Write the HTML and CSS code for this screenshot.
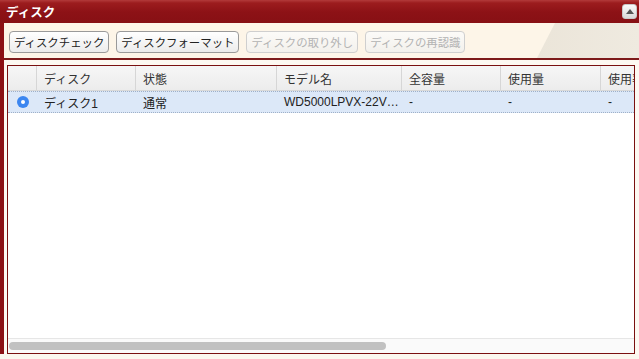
FILE: index.html
```html
<!DOCTYPE html>
<html lang="ja">
<head>
<meta charset="utf-8">
<link rel="stylesheet" href="styles.css">
</head>
<body>
<div class="panel">
  <div class="titlebar">
    <span class="title">ディスク</span>
    <span class="collapse"><svg width="8" height="5" viewBox="0 0 8 5"><path d="M0 5 L4 0 L8 5 Z" fill="#555"/></svg></span>
  </div>
  <div class="body">
    <div class="toolbar">
      <button class="btn">ディスクチェック</button>
      <button class="btn">ディスクフォーマット</button>
      <button class="btn disabled">ディスクの取り外し</button>
      <button class="btn disabled">ディスクの再認識</button>
    </div>
    <div class="content">
      <div class="grid">
        <div class="scroll">
          <div class="row head">
            <div class="cell c0"></div>
            <div class="cell c1">ディスク</div>
            <div class="cell c2">状態</div>
            <div class="cell c3">モデル名</div>
            <div class="cell c4">全容量</div>
            <div class="cell c5">使用量</div>
            <div class="cell c6">使用率</div>
          </div>
          <div class="row sel">
            <div class="cell c0"><span class="radio"></span></div>
            <div class="cell c1">ディスク1</div>
            <div class="cell c2">通常</div>
            <div class="cell c3">WD5000LPVX-22V…</div>
            <div class="cell c4">-</div>
            <div class="cell c5">-</div>
            <div class="cell c6">-</div>
          </div>
        </div>
        <div class="hscroll"><div class="thumb"></div></div>
      </div>
    </div>
  </div>
</div>
</body>
</html>
```
FILE: styles.css
```css
* { box-sizing: border-box; }
html, body { margin: 0; padding: 0; }
body {
  width: 639px;
  height: 359px;
  background: #fbf7ef;
  font-family: "Liberation Sans", "Noto Sans CJK JP", sans-serif;
  font-size: 12px;
  color: #222;
  overflow: hidden;
}
.panel {
  width: 639px;
  display: flex;
  flex-direction: column;
}
.titlebar {
  height: 23px;
  background: linear-gradient(#b23a3a 0px, #9c1c1e 3px, #8d1216 12px, #871014 23px);
  display: flex;
  align-items: center;
  justify-content: space-between;
  padding: 0 2px 0 6px;
}
.title {
  color: #fff;
  font-weight: bold;
  font-size: 12.5px;
  font-family: "Noto Sans CJK JP", sans-serif;
  margin-top: -1px;
}
.collapse {
  width: 15px;
  height: 15px;
  border-radius: 3px;
  background: linear-gradient(#fafafa, #d9d9d9);
  border: 1px solid #c8c8c8;
  display: flex;
  align-items: center;
  justify-content: center;
}
.body {
  border-left: 4px solid #8c1014;
  height: 331px;
  display: flex;
  flex-direction: column;
}
.toolbar {
  position: relative;
  height: 38px;
  background: #fdf5e8;
  border-bottom: 2px solid #7d1a1a;
  display: flex;
  align-items: center;
  gap: 7px;
  padding: 2px 0 0 5px;
  overflow: hidden;
}
.toolbar::after {
  content: "";
  position: absolute;
  top: 0;
  right: 0;
  width: 102px;
  height: 100%;
  background: linear-gradient(to right, #ebe5d9, #efeae0);
  clip-path: polygon(18px 0, 100% 0, 100% 100%, 0 100%);
}
.btn {
  position: relative;
  z-index: 1;
  height: 22px;
  padding: 0 4px;
  font-family: "Noto Sans CJK JP", sans-serif;
  font-size: 11.4px;
  color: #222;
  background: linear-gradient(#ffffff, #ececec);
  border: 1px solid #9a9a9a;
  border-radius: 4px;
}
.btn.disabled {
  color: #b3b3b3;
  border-color: #cfcfcf;
  background: linear-gradient(#fcfbf8, #f3f1ec);
}
.content {
  flex: 1;
  padding: 5px 4px 0 3px;
  background: #fdf9f2;
}
.grid {
  height: 289px;
  border: 1px solid #7a1010;
  background: #fff;
  display: flex;
  flex-direction: column;
  overflow: hidden;
}
.scroll {
  flex: 1;
}
.row {
  display: flex;
}
.head {
  height: 25px;
  background: linear-gradient(#f6f6f6, #ececec);
  border-bottom: 1px solid #d8d8d8;
}
.head .cell {
  border-right: 1px solid #d6d6d6;
  color: #333;
}
.sel {
  height: 22px;
  background: #dce8f8;
  border-top: 1px dotted #9fb0c8;
  border-bottom: 1px dotted #9fb0c8;
}
.cell {
  display: flex;
  align-items: center;
  padding-left: 7px;
  white-space: nowrap;
  overflow: hidden;
  flex: none;
}
.c0 { width: 29px; padding-left: 0; justify-content: center; }
.c1 { width: 99px; }
.c2 { width: 141px; }
.c3 { width: 125px; }
.c4 { width: 99px; }
.c5 { width: 100px; }
.c6 { width: 40px; }
.radio {
  width: 12px;
  height: 12px;
  border-radius: 50%;
  background: #3b86f0;
  display: flex;
  align-items: center;
  justify-content: center;
}
.radio::before {
  content: "";
  width: 4px;
  height: 4px;
  border-radius: 50%;
  background: #fff;
}
.hscroll {
  height: 15px;
  border-top: 1px solid #e6e6e6;
  background: #fafafa;
  padding: 3px 0 0 1px;
}
.thumb {
  width: 377px;
  height: 8px;
  border-radius: 4px;
  background: #c1c1c1;
}
```
